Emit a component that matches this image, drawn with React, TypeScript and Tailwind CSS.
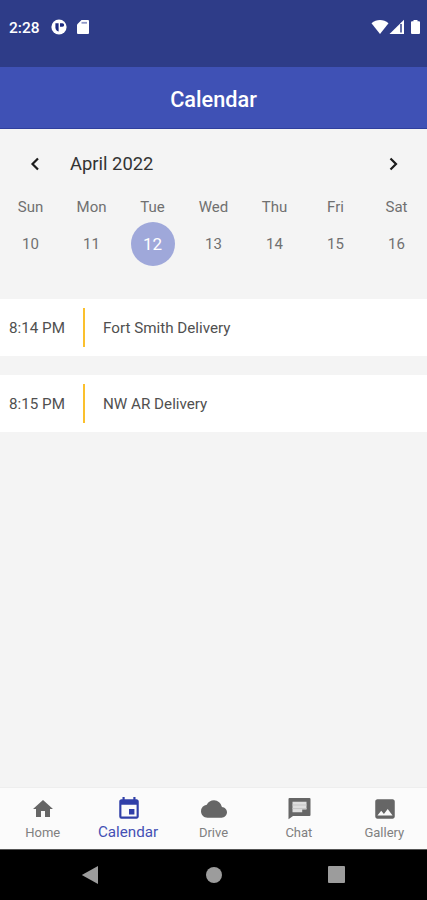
import React from 'react';
import { MdCloud, MdEvent, MdHome, MdImage } from 'react-icons/md';

interface Day {
  name: string;
  date: number;
}

interface CalendarEvent {
  time: string;
  title: string;
}

interface Tab {
  label: string;
  icon: React.ReactNode;
}

// Square speech bubble with a light message block inside
const ChatIcon: React.FC = () => (
  <svg className="h-[26px] w-[26px]" viewBox="0 0 26 26">
    <path d="M3.500 2h20a1 1 0 0 1 1 1v16a1 1 0 0 1-1 1H7l-4.500 3.300V3a1 1 0 0 1 1-1z" fill="currentColor" />
    <path d="M6.500 5.800h14v7.700h-4.300v2.700H6.500z" fill="#dedede" />
    <path d="M6.500 9h14M6.500 12.600h14" stroke="#c4c4c4" strokeWidth="1" />
  </svg>
);

const DAYS: Day[] = [
  { name: 'Sun', date: 10 },
  { name: 'Mon', date: 11 },
  { name: 'Tue', date: 12 },
  { name: 'Wed', date: 13 },
  { name: 'Thu', date: 14 },
  { name: 'Fri', date: 15 },
  { name: 'Sat', date: 16 },
];

const EVENTS: CalendarEvent[] = [
  { time: '8:14 PM', title: 'Fort Smith Delivery' },
  { time: '8:15 PM', title: 'NW AR Delivery' },
];

const TABS: Tab[] = [
  { label: 'Home', icon: <MdHome size={24} /> },
  { label: 'Calendar', icon: <MdEvent size={26} /> },
  { label: 'Drive', icon: <MdCloud size={26} /> },
  { label: 'Chat', icon: <ChatIcon /> },
  { label: 'Gallery', icon: <MdImage size={26} /> },
];

const StatusBar: React.FC = () => (
  <div className="flex h-[67px] shrink-0 items-start bg-[#2e3c88] pt-[19px] pr-[7px] pl-[9px] text-white">
    <span className="w-[42px] text-[15.5px] leading-[18px] font-medium">2:28</span>
    <svg className="h-4 w-4" viewBox="0 0 16 16">
      <circle cx="8" cy="8" r="7.6" fill="#fff" />
      <path d="M4.400 4.200h3.200v8.300C5.700 12 4.600 10.600 4.400 8.400z" fill="#1c2a80" />
      <path d="M9 4.300h2.400a1.600 1.600 0 0 1 0 3.500H9z" fill="#1c2a80" />
    </svg>
    <svg className="ml-[10px] h-4 w-3" viewBox="0 0 12 16">
      <path d="M4.500 1H11a1 1 0 0 1 1 1v12a1 1 0 0 1-1 1H1a1 1 0 0 1-1-1V5.500z" fill="#fff" />
      <path d="M4.500 3.800h5.500" stroke="#8f97c6" strokeWidth="1.800" />
    </svg>
    <div className="ml-auto flex">
      <svg className="h-4 w-[18px]" viewBox="0 0 18 16">
        <path d="M.5 4.200C5.500-.1 12.500-.1 17.500 4.200L9 15z" fill="#fff" />
      </svg>
      <svg className="h-4 w-[15px]" viewBox="0 0 15 16">
        <path d="M15 .8V15H.5z" fill="#fff" />
        <path d="M12 5v8.500" stroke="#2e3c88" strokeWidth="1.500" />
      </svg>
      <svg className="ml-[7px] h-4 w-[9px]" viewBox="0 0 9 16">
        <path d="M2.500 1h4v1.200H8a1 1 0 0 1 1 1V14a1 1 0 0 1-1 1H1a1 1 0 0 1-1-1V3.200a1 1 0 0 1 1-1h1.500z" fill="#fff" />
      </svg>
    </div>
  </div>
);

const Chevron: React.FC<{ direction: 'left' | 'right' }> = ({ direction }) => (
  <svg className="h-6 w-6" viewBox="0 0 24 24" fill="none" stroke="#1c1c1c" strokeWidth={2.2}>
    <path d={direction === 'left' ? 'M15 6.500 9.500 12l5.500 5.500' : 'M9.500 6.500 15 12l-5.500 5.500'} />
  </svg>
);

const WeekStrip: React.FC<{ selected: number }> = ({ selected }) => (
  <div className="grid grid-cols-7 text-center text-[15px] text-[#707070]">
    {DAYS.map((day) => (
      <div key={day.name} className="flex flex-col items-center">
        <span className="leading-[18px]">{day.name}</span>
        <span
          className={`mt-[6px] flex h-11 w-11 items-center justify-center rounded-full ${
            day.date === selected ? 'bg-[#9fa8da] pt-px text-[17px] text-white' : ''
          }`}
        >
          {day.date}
        </span>
      </div>
    ))}
  </div>
);

const EventRow: React.FC<{ event: CalendarEvent }> = ({ event }) => (
  <div className="flex h-[57px] items-center bg-white text-[15.200px] text-[#505050]">
    <span className="w-[83px] pt-[2px] pl-[9px]">{event.time}</span>
    <span className="h-[39px] w-[2px] bg-[#fbc02d]" />
    <span className="pt-[2px] pl-[18px]">{event.title}</span>
  </div>
);

const TabBar: React.FC<{ active: string }> = ({ active }) => (
  <div className="grid h-[62px] shrink-0 grid-cols-5 border-t border-[#eeeeee] bg-[#fbfbfb]">
    {TABS.map(({ label, icon }) => (
      <button
        key={label}
        className={`flex flex-col items-center pt-2 ${
          label === active ? 'text-[#303fa8]' : 'text-[#666666]'
        }`}
      >
        <span className="flex h-[26px] items-center pl-px">{icon}</span>
        <span
          className={
            label === active
              ? 'pt-px text-[15.200px] leading-[18px] text-[#4450b4]'
              : 'pt-[3px] text-[13px] leading-4 text-[#808080]'
          }
        >
          {label}
        </span>
      </button>
    ))}
  </div>
);

const SystemNav: React.FC = () => (
  <div className="flex h-[51px] shrink-0 items-center justify-between border-t border-[#555555] bg-black pr-[82px] pb-px pl-[81px]">
    <svg className="h-5 w-[18px]" viewBox="0 0 18 20">
      <path d="M17 1v18L.8 10z" fill="#9c9c9c" />
    </svg>
    <span className="h-4 w-4 rounded-full bg-[#9c9c9c]" />
    <span className="h-[17px] w-[17px] rounded-[1px] bg-[#9c9c9c]" />
  </div>
);

const App: React.FC = () => (
  <div className="flex h-screen w-full flex-col overflow-hidden bg-[#f4f4f4] font-['Roboto',sans-serif]">
    <StatusBar />
    <header className="flex h-[62px] shrink-0 items-center justify-center border-b border-[#2f3f9d] bg-[#3f51b5] pt-[5px] text-[21.700px] font-medium text-white">
      <h1>Calendar</h1>
    </header>

    <main className="flex-1">
      {/* Month switcher */}
      <div className="flex items-center pt-[23px] pr-[22px] pb-[22px] pl-[23px]">
        <button>
          <Chevron direction="left" />
        </button>
        <h2 className="pl-[23px] text-[18.400px] leading-6 text-[#333333]">April 2022</h2>
        <button className="ml-auto">
          <Chevron direction="right" />
        </button>
      </div>

      <WeekStrip selected={12} />

      {/* Events of the selected day */}
      <div className="mt-[33px] flex flex-col gap-[19px]">
        {EVENTS.map((event) => (
          <EventRow key={event.time} event={event} />
        ))}
      </div>
    </main>

    <TabBar active="Calendar" />
    <SystemNav />
  </div>
);

export default App;
